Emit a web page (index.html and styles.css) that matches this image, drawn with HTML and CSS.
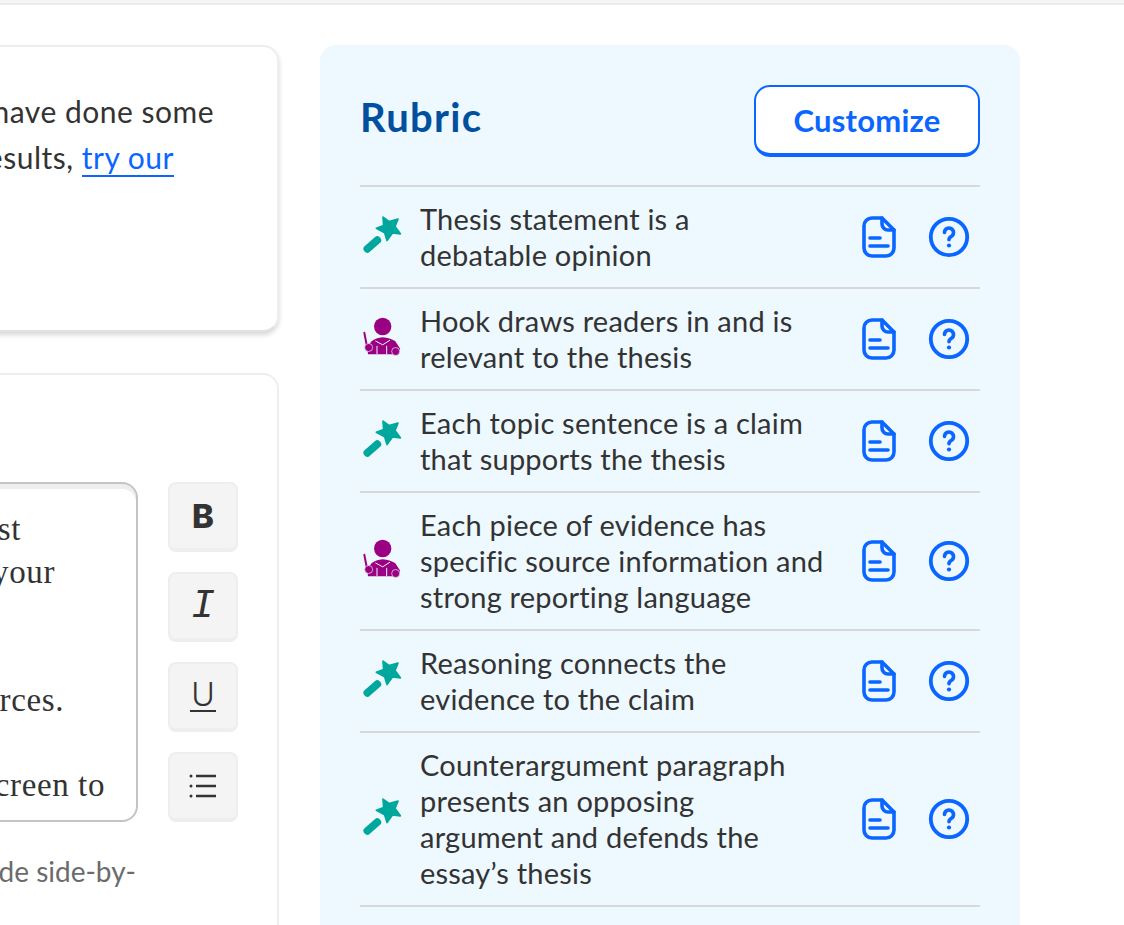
FILE: index.html
```html
<!DOCTYPE html>
<html lang="en">
<head>
<meta charset="utf-8">
<title>Rubric</title>
<link rel="stylesheet" href="styles.css">
</head>
<body>
<svg class="defs" width="0" height="0" aria-hidden="true">
  <symbol id="wand" viewBox="60 73.5 135 135">
    <path class="wand-star" d="M129 80 L147 93 L174 86 L165 108 L181 130 L158 127 L141 150 L134 127 L109 113 L131 105 Z"/>
    <line class="wand-stick" x1="82" y1="175" x2="112" y2="149"/>
  </symbol>
  <symbol id="person" viewBox="60 379.5 135 135">
    <circle class="p-fill" cx="128" cy="408" r="26"/>
    <path class="p-fill" d="M94 453 Q108 441 128 440 Q150 441 166 452 L180 474 L176 491 H84 L82 470 Z"/>
    <path class="p-cut" d="M106 451 L128 463 L150 449"/>
    <path class="p-cut" d="M111 466 V491 M140 466 V491"/>
    <line class="p-pointer" x1="73" y1="427" x2="81" y2="468"/>
    <circle class="p-hand" cx="86" cy="471" r="12"/>
    <circle class="p-hand" cx="167" cy="483" r="12"/>
  </symbol>
  <symbol id="doc" viewBox="0 0 34 42">
    <path class="line-icon" d="M10 2 H20 L32 14 V32 a8 8 0 0 1 -8 8 H10 a8 8 0 0 1 -8 -8 V10 a8 8 0 0 1 8 -8 Z"/>
    <path class="line-icon" d="M20 2 V8 a6 6 0 0 0 6 6 H32"/>
    <path class="line-icon" d="M8 22 H18 M8 30 H26"/>
  </symbol>
  <symbol id="help" viewBox="0 0 42 42">
    <circle class="line-icon help-ring" cx="21" cy="21" r="18.2"/>
    <path class="line-icon" d="M16.5 16.5 a4.5 4.5 0 1 1 7 3.8 c-1.6 1 -2.5 1.8 -2.5 3.5"/>
    <circle class="help-dot" cx="21" cy="29.5" r="2.1"/>
  </symbol>
</svg>

<div class="topbar"></div>

<main class="page">
  <section class="left">
    <div class="card card-intro">
      <p class="intro-line">tested that you have done some</p>
      <p class="intro-line intro-line-short">better results, <a class="link" href="#">try our</a></p>
    </div>

    <div class="card card-editor">
      <div class="editor-col">
        <div class="editor">
          <p class="ed-line ed-a">the first</p>
          <p class="ed-line ed-b">in your</p>
          <p class="ed-line">&nbsp;</p>
          <p class="ed-line">&nbsp;</p>
          <p class="ed-line ed-c">sources.</p>
          <p class="ed-line">&nbsp;</p>
          <p class="ed-line ed-d">your screen to</p>
        </div>
        <p class="caption">guide side-by-</p>
      </div>
      <div class="toolbar">
        <button class="tool tool-b" type="button">B</button>
        <button class="tool tool-i" type="button">I</button>
        <button class="tool" type="button"><span class="tool-u">U</span></button>
        <button class="tool" type="button">
          <svg class="list-icon" width="28" height="24" viewBox="0 0 28 24">
            <path class="list-lines" d="M7 2 H27 M7 12 H27 M7 22 H27"/>
            <circle class="list-dot" cx="2" cy="2" r="1.5"/>
            <circle class="list-dot" cx="2" cy="12" r="1.5"/>
            <circle class="list-dot" cx="2" cy="22" r="1.5"/>
          </svg>
        </button>
      </div>
    </div>
  </section>

  <aside class="rubric">
    <header class="rubric-head">
      <h2 class="rubric-title">Rubric</h2>
      <button class="customize" type="button">Customize</button>
    </header>
    <ul class="rows">
      <li class="row">
        <svg class="kind"><use href="#wand"/></svg>
        <span class="row-text">Thesis statement is a<br>debatable opinion</span>
        <svg class="doc"><use href="#doc"/></svg>
        <svg class="help"><use href="#help"/></svg>
      </li>
      <li class="row">
        <svg class="kind"><use href="#person"/></svg>
        <span class="row-text">Hook draws readers in and is<br>relevant to the thesis</span>
        <svg class="doc"><use href="#doc"/></svg>
        <svg class="help"><use href="#help"/></svg>
      </li>
      <li class="row">
        <svg class="kind"><use href="#wand"/></svg>
        <span class="row-text">Each topic sentence is a claim<br>that supports the thesis</span>
        <svg class="doc"><use href="#doc"/></svg>
        <svg class="help"><use href="#help"/></svg>
      </li>
      <li class="row">
        <svg class="kind"><use href="#person"/></svg>
        <span class="row-text">Each piece of evidence has<br>specific source information and<br>strong reporting language</span>
        <svg class="doc"><use href="#doc"/></svg>
        <svg class="help"><use href="#help"/></svg>
      </li>
      <li class="row">
        <svg class="kind"><use href="#wand"/></svg>
        <span class="row-text">Reasoning connects the<br>evidence to the claim</span>
        <svg class="doc"><use href="#doc"/></svg>
        <svg class="help"><use href="#help"/></svg>
      </li>
      <li class="row">
        <svg class="kind"><use href="#wand"/></svg>
        <span class="row-text">Counterargument paragraph<br>presents an opposing<br>argument and defends the<br>essay’s thesis</span>
        <svg class="doc"><use href="#doc"/></svg>
        <svg class="help"><use href="#help"/></svg>
      </li>
    </ul>
  </aside>
</main>
</body>
</html>
```
FILE: styles.css
```css
* { box-sizing: border-box; }
html, body { margin: 0; height: 925px; overflow: hidden; background: #fff; }
body { font-family: "Lato", "Open Sans", sans-serif; color: #333; font-variant-ligatures: none; }
p, h2, ul { margin: 0; padding: 0; }
.defs { position: absolute; }

.topbar { height: 5px; background: #f5f5f5; border-bottom: 2px solid #ececec; }

.page { display: flex; gap: 41px; margin-left: -320px; padding-top: 40px; align-items: flex-start; }

.left { width: 599px; display: flex; flex-direction: column; gap: 41px; flex: none; }
.card { background: #fff; border: 2px solid #eee; border-radius: 16px; }
.card-intro { height: 287px; padding-top: 41px; box-shadow: 0 3px 5px rgba(0,0,0,.16); border-bottom-color: #e2e2e2; }
.intro-line { font-size: 30px; letter-spacing: .5px; line-height: 46px; white-space: nowrap; text-align: right; padding-right: 63px; }
.intro-line-short { padding-right: 103px; }
.link { color: #0a66ff; text-decoration: none; border-bottom: 2px solid #0a66ff; }

.card-editor { height: 600px; display: flex; align-items: flex-start; gap: 30px; padding: 107px 39px 0 0; }
.editor-col { flex: 1; min-width: 0; }
.editor { height: 340px; border: 2px solid #c4c4c4; border-left: 0; border-radius: 0 16px 16px 0; box-shadow: inset 0 5px 0 #eee; padding-top: 24px; }
.ed-line { font-family: "Liberation Serif", serif; font-size: 33px; letter-spacing: .6px; line-height: 42.7px; text-align: right; white-space: nowrap; }
.ed-a { padding-right: 115px; }
.ed-b { padding-right: 81px; }
.ed-c { padding-right: 72px; }
.ed-d { padding-right: 31px; }
.caption { margin-top: 32px; font-size: 28px; line-height: 34px; color: #6b6b6b; text-align: right; white-space: nowrap; padding-right: 2px; }

.toolbar { flex: none; width: 70px; display: flex; flex-direction: column; gap: 20px; }
.tool { width: 70px; height: 70px; padding: 0; display: flex; align-items: center; justify-content: center; background: #f4f4f4; border: 2px solid #eee; border-bottom-width: 4px; border-radius: 8px; color: #333; }
.tool-b { font-family: "Inter", sans-serif; font-weight: 800; font-size: 33px; }
.tool-i { font-family: "Liberation Mono", monospace; font-style: italic; font-size: 40px; }
.tool-u { font-family: "Inter", sans-serif; font-weight: 300; font-size: 32px; line-height: 30px; border-bottom: 2px solid #333; padding: 0 1px; }
.list-lines { fill: none; stroke: #333; stroke-width: 2.4; }
.list-dot { fill: #333; }

.rubric { width: 700px; height: 900px; flex: none; background: #edf8ff; border-radius: 16px 16px 0 0; padding: 40px; }
.rubric-head { display: flex; justify-content: space-between; align-items: flex-start; height: 102px; border-bottom: 2px solid #d8d8d8; }
.rubric-title { font-size: 40px; font-weight: 700; letter-spacing: 1.3px; line-height: 64px; color: #00509e; }
.customize { width: 226px; height: 72px; background: #fff; border: 2px solid #0a66ff; border-bottom-width: 4px; border-radius: 16px; color: #0a66ff; font: 700 31px "Lato", sans-serif; letter-spacing: .2px; }

.rows { list-style: none; }
.row { display: flex; align-items: center; padding: 14px 0; border-bottom: 2px solid #d8d8d8; }
.kind { width: 45px; height: 45px; flex: none; margin-right: 15px; }
.row-text { flex: 1; font-size: 29px; letter-spacing: .22px; line-height: 36px; white-space: nowrap; }
.doc { width: 34px; height: 42px; flex: none; }
.help { width: 42px; height: 42px; flex: none; margin: 0 10px 0 32px; }

.line-icon { fill: none; stroke: #0a66ff; stroke-width: 3.6; stroke-linecap: round; stroke-linejoin: round; }
.help-ring { stroke-width: 3.8; }
.help-dot { fill: #0a66ff; }
.wand-star { fill: #00a79d; stroke: #00a79d; stroke-width: 5; stroke-linejoin: round; }
.wand-stick { stroke: #00a79d; stroke-width: 23; stroke-linecap: round; }
.p-fill { fill: #9b0082; }
.p-cut { fill: none; stroke: #edf8ff; stroke-width: 3; }
.p-pointer { stroke: #9b0082; stroke-width: 6; stroke-linecap: round; }
.p-hand { fill: #9b0082; stroke: #edf8ff; stroke-width: 2; }
```
